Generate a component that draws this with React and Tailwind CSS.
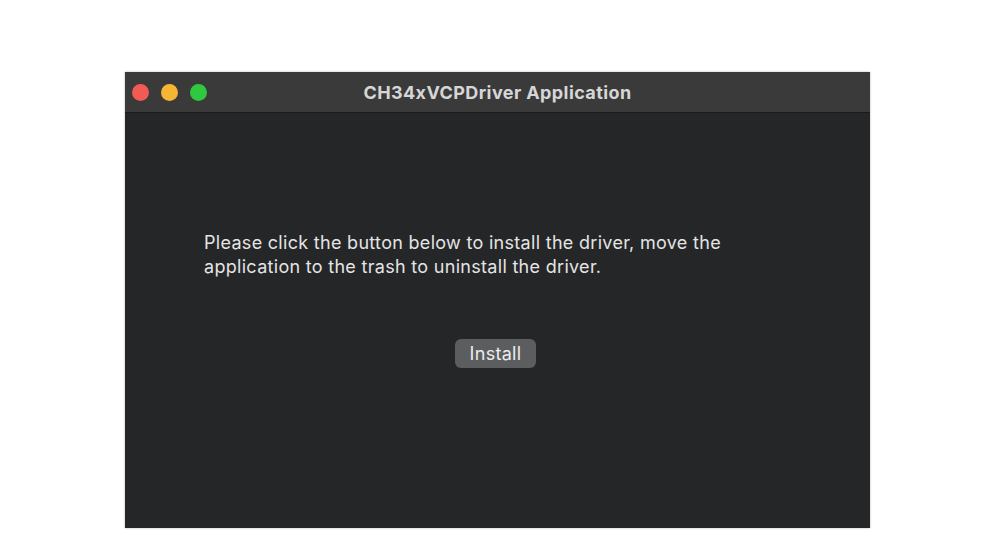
export default function App() {
  return (
    <div className="w-[1000px] h-[542px] bg-white pt-[72px] pl-[125px] font-['Inter',sans-serif]">
      <div className="w-[745px] h-[456px] bg-[#252627] flex flex-col shadow-[0_0_2px_rgba(0,0,0,0.3)]">
        {/* Title bar */}
        <div className="h-[41px] bg-[#3a3a3b] border-b border-[#1b1b1c] flex items-center relative">
          <div className="flex gap-[12px] pl-[7px]">
            <span className="w-[17px] h-[17px] rounded-full bg-[#f25a56]" />
            <span className="w-[17px] h-[17px] rounded-full bg-[#f5b634]" />
            <span className="w-[17px] h-[17px] rounded-full bg-[#2fc840]" />
          </div>
          <div className="absolute inset-0 flex items-center justify-center text-[18px] font-bold tracking-[0.4px] text-[#d6d6d6]">
            CH34xVCPDriver Application
          </div>
        </div>
        {/* Body */}
        <div className="flex-1 flex flex-col pt-[118px]">
          <p className="pl-[79px] text-[18px] leading-[24px] tracking-[0.3px] text-[#e4e4e4]">
            Please click the button below to install the driver, move the
            <br />
            application to the trash to uninstall the driver.
          </p>
          <div className="flex justify-center mt-[60px] pr-[4px]">
            <button className="w-[81px] h-[29px] rounded-[6px] bg-[#5c5d5f] text-[18px] tracking-[0.3px] text-[#ececec]">
              Install
            </button>
          </div>
        </div>
      </div>
    </div>
  );
}
